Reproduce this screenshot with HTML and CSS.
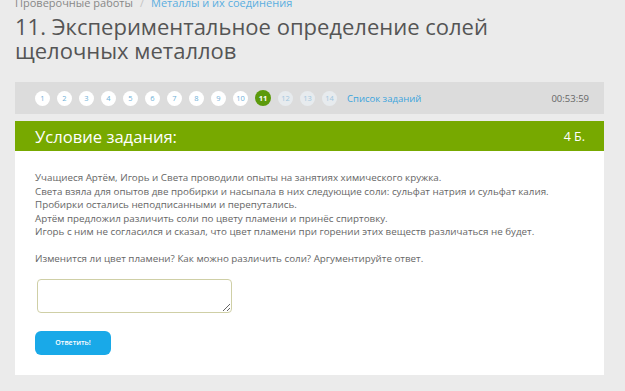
FILE: index.html
```html
<!DOCTYPE html>
<html lang="ru">
<head>
<meta charset="utf-8">
<link rel="stylesheet" href="styles.css">
</head>
<body>
<div class="page">
  <div class="crumbs"><span class="crumb">Проверочные работы</span><span class="sep">/</span><a class="crumb-link">Металлы и их соединения</a></div>
  <h1 class="title">11. Экспериментальное определение солей щелочных металлов</h1>
  <div class="nav">
    <div class="steps">
      <span class="step done">1</span>
      <span class="step done">2</span>
      <span class="step done">3</span>
      <span class="step done">4</span>
      <span class="step done">5</span>
      <span class="step done">6</span>
      <span class="step done">7</span>
      <span class="step done">8</span>
      <span class="step done">9</span>
      <span class="step done">10</span>
      <span class="step current">11</span>
      <span class="step todo">12</span>
      <span class="step todo">13</span>
      <span class="step todo">14</span>
      <a class="list-link">Список заданий</a>
    </div>
    <div class="timer">00:53:59</div>
  </div>
  <div class="task">
    <div class="task-head">
      <span class="task-title">Условие задания:</span>
      <span class="task-score">4 Б.</span>
    </div>
    <div class="task-body">
      <p class="text">Учащиеся Артём, Игорь и Света проводили опыты на занятиях химического кружка.<br>
      Света взяла для опытов две пробирки и насыпала в них следующие соли: сульфат натрия и сульфат калия.<br>
      Пробирки остались неподписанными и перепутались.<br>
      Артём предложил различить соли по цвету пламени и принёс спиртовку.<br>
      Игорь с ним не согласился и сказал, что цвет пламени при горении этих веществ различаться не будет.</p>
      <p class="text">Изменится ли цвет пламени? Как можно различить соли? Аргументируйте ответ.</p>
      <textarea class="answer"></textarea>
      <button class="submit">Ответить!</button>
    </div>
  </div>
</div>
</body>
</html>
```
FILE: styles.css
```css
html, body {
  margin: 0;
  padding: 0;
  background: #ebebeb;
  font-family: "Open Sans", "Noto Sans", sans-serif;
  overflow: hidden;
}
.page {
  width: 589px;
  padding-left: 15px;
}
.crumbs {
  font-size: 11px;
  line-height: 13px;
  margin-top: -4px;
  color: #888;
  display: flex;
  gap: 7px;
}
.sep { color: #c4c4c4; }
.crumb-link { color: #5aaee0; }
.title {
  margin: 5px 0 0;
  font-weight: 400;
  font-size: 22px;
  line-height: 24px;
  color: #555;
  width: 500px;
}
.nav {
  margin-top: 20px;
  height: 32px;
  background: #dcdcdc;
  display: flex;
  align-items: center;
  justify-content: space-between;
  padding: 0 15px 0 20px;
}
.steps {
  display: flex;
  align-items: center;
  gap: 7px;
}
.step {
  width: 15px;
  height: 15px;
  border-radius: 50%;
  display: flex;
  align-items: center;
  justify-content: center;
  font-size: 7.5px;
  color: #6fb0d8;
  background: #fff;
}
.step.current {
  background: #5c9a0c;
  color: #fff;
  width: 16px;
  height: 16px;
  font-weight: 700;
}
.step.todo {
  background: #e7ebee;
  color: #9fc6de;
}
.list-link {
  margin-left: 3px;
  font-size: 9.5px;
  color: #3ba4dc;
}
.timer {
  font-size: 9.5px;
  color: #666;
}
.task {
  margin-top: 7px;
  background: #fff;
}
.task-head {
  height: 30px;
  background: #77a900;
  display: flex;
  align-items: center;
  justify-content: space-between;
  padding: 0 19px 0 20px;
  color: #fff;
}
.task-title { font-size: 16.6px; }
.task-score { font-size: 12.5px; }
.task-body {
  padding: 20px 20px 20px;
  display: flex;
  flex-direction: column;
  align-items: flex-start;
}
.text {
  margin: 0 0 13px;
  font-size: 9.8px;
  line-height: 13.6px;
  color: #666;
}
.answer {
  margin: 0 0 0 2px;
  width: 195px;
  height: 34px;
  box-sizing: border-box;
  border: 1.5px solid #cfcfa6;
  border-radius: 4px;
  background: #fff;
  resize: vertical;
}
.submit {
  margin-top: 18px;
  width: 76px;
  height: 24px;
  border: none;
  border-radius: 6px;
  background: #19a9e8;
  color: #fff;
  font-family: "Open Sans", sans-serif;
  font-size: 7px;
  font-weight: 600;
}
```
